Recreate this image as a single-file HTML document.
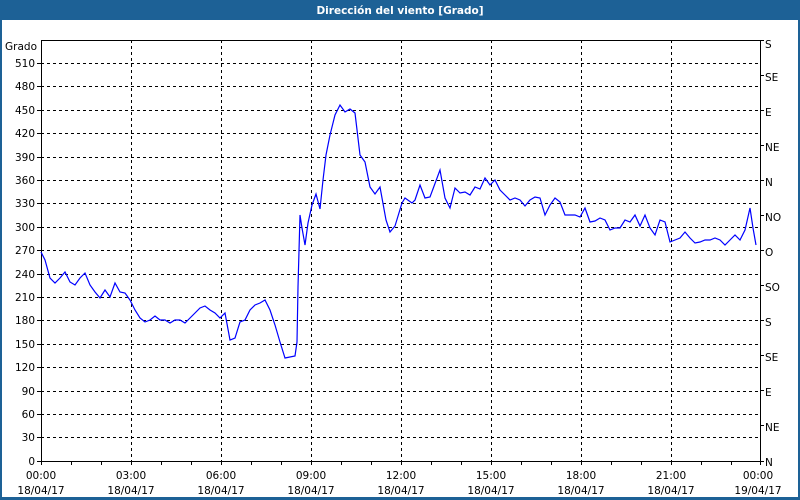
<!DOCTYPE html>
<html><head><meta charset="utf-8"><style>
html,body{margin:0;padding:0;width:800px;height:500px;overflow:hidden;background:#fff;}
svg{display:block;font-family:"DejaVu Sans","Liberation Sans",sans-serif;font-size:10.5px;}
</style></head><body>
<svg width="800" height="500" xmlns="http://www.w3.org/2000/svg">
<rect x="0" y="0" width="800" height="500" fill="#1d6196"/>
<rect x="2" y="20" width="796" height="477" fill="#fff"/>
<text x="400" y="14" fill="#fff" font-weight="bold" font-size="10.5" text-anchor="middle">Dirección del viento [Grado]</text>
<g stroke="#000" stroke-dasharray="3,3" stroke-width="1">
<line x1="41" x2="760" y1="63.5" y2="63.5"/><line x1="41" x2="760" y1="86.5" y2="86.5"/><line x1="41" x2="760" y1="110.5" y2="110.5"/><line x1="41" x2="760" y1="133.5" y2="133.5"/><line x1="41" x2="760" y1="157.5" y2="157.5"/><line x1="41" x2="760" y1="180.5" y2="180.5"/><line x1="41" x2="760" y1="203.5" y2="203.5"/><line x1="41" x2="760" y1="227.5" y2="227.5"/><line x1="41" x2="760" y1="250.5" y2="250.5"/><line x1="41" x2="760" y1="274.5" y2="274.5"/><line x1="41" x2="760" y1="297.5" y2="297.5"/><line x1="41" x2="760" y1="320.5" y2="320.5"/><line x1="41" x2="760" y1="344.5" y2="344.5"/><line x1="41" x2="760" y1="367.5" y2="367.5"/><line x1="41" x2="760" y1="391.5" y2="391.5"/><line x1="41" x2="760" y1="414.5" y2="414.5"/><line x1="41" x2="760" y1="437.5" y2="437.5"/>
<line y1="40" y2="461" x1="131.5" x2="131.5"/><line y1="40" y2="461" x1="221.5" x2="221.5"/><line y1="40" y2="461" x1="311.5" x2="311.5"/><line y1="40" y2="461" x1="401.5" x2="401.5"/><line y1="40" y2="461" x1="491.5" x2="491.5"/><line y1="40" y2="461" x1="581.5" x2="581.5"/><line y1="40" y2="461" x1="671.5" x2="671.5"/>
</g>
<rect x="41.5" y="40.5" width="719" height="421" fill="none" stroke="#000"/>
<g stroke="#000">
<path d="M71.5 461v4M101.5 461v4M131.5 461v4M161.5 461v4M191.5 461v4M221.5 461v4M251.5 461v4M281.5 461v4M311.5 461v4M341.5 461v4M371.5 461v4M401.5 461v4M431.5 461v4M461.5 461v4M491.5 461v4M521.5 461v4M551.5 461v4M581.5 461v4M611.5 461v4M641.5 461v4M671.5 461v4M701.5 461v4M731.5 461v4M41.5 461v4M760.5 461v4"/>
<path d="M37 63.5h4M37 86.5h4M37 110.5h4M37 133.5h4M37 157.5h4M37 180.5h4M37 203.5h4M37 227.5h4M37 250.5h4M37 274.5h4M37 297.5h4M37 320.5h4M37 344.5h4M37 367.5h4M37 391.5h4M37 414.5h4M37 437.5h4M37 461.5h4"/>
<path d="M760 40.5h4M760 75.5h4M760 110.5h4M760 145.5h4M760 180.5h4M760 215.5h4M760 250.5h4M760 285.5h4M760 320.5h4M760 355.5h4M760 390.5h4M760 425.5h4M760 461.5h4"/>
</g>
<g fill="#000" text-anchor="end">
<text x="37" y="50">Grado</text>
<text x="35" y="67">510</text><text x="35" y="90">480</text><text x="35" y="114">450</text><text x="35" y="137">420</text><text x="35" y="161">390</text><text x="35" y="184">360</text><text x="35" y="207">330</text><text x="35" y="231">300</text><text x="35" y="254">270</text><text x="35" y="278">240</text><text x="35" y="301">210</text><text x="35" y="324">180</text><text x="35" y="348">150</text><text x="35" y="371">120</text><text x="35" y="395">90</text><text x="35" y="418">60</text><text x="35" y="441">30</text><text x="35" y="465">0</text>
</g>
<g fill="#000">
<text x="765" y="48">S</text><text x="765" y="81">SE</text><text x="765" y="116">E</text><text x="765" y="151">NE</text><text x="765" y="186">N</text><text x="765" y="221">NO</text><text x="765" y="256">O</text><text x="765" y="291">SO</text><text x="765" y="326">S</text><text x="765" y="361">SE</text><text x="765" y="396">E</text><text x="765" y="431">NE</text><text x="765" y="466">N</text>
</g>
<g fill="#000" text-anchor="middle">
<text x="41" y="479">00:00</text><text x="41" y="494">18/04/17</text>
<text x="131" y="479">03:00</text><text x="131" y="494">18/04/17</text>
<text x="221" y="479">06:00</text><text x="221" y="494">18/04/17</text>
<text x="311" y="479">09:00</text><text x="311" y="494">18/04/17</text>
<text x="401" y="479">12:00</text><text x="401" y="494">18/04/17</text>
<text x="491" y="479">15:00</text><text x="491" y="494">18/04/17</text>
<text x="581" y="479">18:00</text><text x="581" y="494">18/04/17</text>
<text x="671" y="479">21:00</text><text x="671" y="494">18/04/17</text>
<text x="758" y="479">00:00</text><text x="758" y="494">19/04/17</text>
</g>
<polyline fill="none" stroke="#0000ff" stroke-width="1.2" points="41,252 45,260 50,278 55,283 60,278 65,272 70,282 75,285 80,278 85,273 90,285 95,292 100,298 105,290 110,297 115,283 120,292 125,293 130,300 135,310 140,318 145,322 150,320 155,316 160,320 165,320 170,323 175,320 180,320 185,323 190,318 195,313 200,308 205,306 210,310 215,313 220,318 225,313 230,340 235,338 240,322 245,320 250,310 255,305 260,303 265,300 270,310 275,325 280,342 285,358 295,356 297,342 298,287 300,215 302,228 305,245 308,223 312,205 316,194 320,209 323,180 326,155 330,135 335,115 340,105 345,112 350,109 355,113 360,155 365,162 370,187 375,194 380,187 386,220 390,232 395,226 402,203 405,198 412,203 415,200 420,185 425,198 430,197 440,170 445,198 450,208 455,188 460,193 465,192 470,195 475,187 480,189 485,178 490,185 495,180 500,190 505,195 510,200 515,198 520,200 525,206 530,200 535,197 540,198 545,215 550,205 555,198 560,202 565,215 570,215 575,215 580,217 585,208 590,222 595,221 600,218 605,220 610,230 615,228 620,228 625,220 630,222 635,215 640,226 645,215 650,228 655,235 660,220 665,222 670,242 675,240 680,238 685,232 690,238 695,243 700,242 705,240 710,240 715,238 720,240 725,245 730,240 735,235 740,240 745,230 750,208 753,228 756,245"/>
</svg>
</body></html>
